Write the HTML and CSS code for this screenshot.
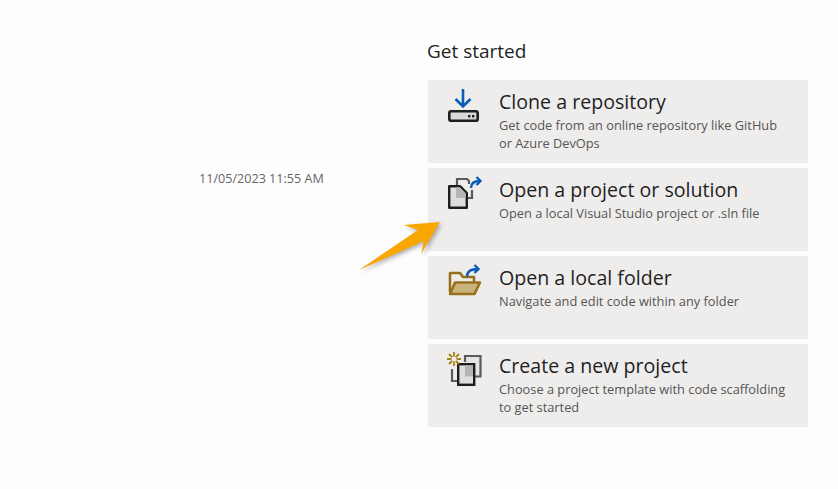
FILE: index.html
```html
<!DOCTYPE html>
<html lang="en">
<head>
<meta charset="utf-8">
<title>Get started</title>
<link rel="stylesheet" href="styles.css">
</head>
<body>
<main class="page">
  <div class="date-col"><span class="date">11/05/2023 11:55 AM</span></div>
  <section class="start">
    <h1 class="start-title">Get started</h1>
    <div class="cards">
      <article class="card">
        <svg class="icon" width="38" height="38" viewBox="0 0 38 38" fill="none">
          <path d="M18 1V18M10.500 11L18 18.500L25.500 11" stroke="#0a5cb8" stroke-width="2.600"/>
          <rect x="4.300" y="23.300" width="28.400" height="9.400" rx="1.800" fill="#d9d9d9" stroke="#1e1e1e" stroke-width="2.600"/>
          <rect x="23" y="27" width="2.400" height="2.400" fill="#1e1e1e"/><rect x="27" y="27" width="2.400" height="2.400" fill="#1e1e1e"/>
        </svg>
        <div class="card-text">
          <h2 class="card-title">Clone a repository</h2>
          <p class="card-desc">Get code from an online repository like GitHub or Azure DevOps</p>
        </div>
      </article>
      <article class="card">
        <svg class="icon" width="38" height="38" viewBox="0 0 38 38" fill="none">
          <path d="M12 9V3H22L24 5V8M27 14V22H22" stroke="#5a5a5a" stroke-width="2.200"/>
          <path d="M4.200 10.200H15L21.800 17V31.800H4.200Z" fill="#dedede" stroke="#1e1e1e" stroke-width="2.400" stroke-linejoin="round"/>
          <path d="M11 11.500H15L20.500 17V22H11Z" fill="#b5b5b5"/>
          <path d="M26 12C26 7 29 5 35 5M31.500 1L35.500 5L31.500 9" stroke="#0a5cb8" stroke-width="2.400"/>
        </svg>
        <div class="card-text">
          <h2 class="card-title">Open a project or solution</h2>
          <p class="card-desc">Open a local Visual Studio project or .sln file</p>
        </div>
      </article>
      <article class="card">
        <svg class="icon" width="38" height="38" viewBox="0 0 38 38" fill="none">
          <path d="M5 28V9H15L18 13H29V18" stroke="#96701a" stroke-width="2.600" stroke-linejoin="round"/>
          <path d="M5 30L10 18.500H35L29.500 30Z" fill="#c9b27c" stroke="#96701a" stroke-width="2.600" stroke-linejoin="round"/>
          <path d="M22 12.500C22 7 26 5 33 5M29.500 1L33.500 5L29.500 9" stroke="#0a5cb8" stroke-width="2.400"/>
        </svg>
        <div class="card-text">
          <h2 class="card-title">Open a local folder</h2>
          <p class="card-desc">Navigate and edit code within any folder</p>
        </div>
      </article>
      <article class="card">
        <svg class="icon" width="38" height="38" viewBox="0 0 38 38" fill="none">
          <path d="M20 4H35.500V24.500H29V12H20Z" fill="#e4e4e4"/>
          <path d="M20 10V4H35.500V24.500H30" stroke="#5a5a5a" stroke-width="2.200"/>
          <path d="M7 17V29H13" stroke="#5a5a5a" stroke-width="2.200"/>
          <rect x="13.200" y="12.200" width="16" height="20.600" fill="#dedede" stroke="#1e1e1e" stroke-width="2.400"/>
          <rect x="20" y="13.400" width="8" height="11" fill="#b5b5b5"/>
          <path d="M9 0V14M2 7H16M4 2L14 12M14 2L4 12" stroke="#a88116" stroke-width="1.800"/>
          <circle cx="9" cy="7" r="2.600" fill="#eeedec"/>
        </svg>
        <div class="card-text">
          <h2 class="card-title">Create a new project</h2>
          <p class="card-desc">Choose a project template with code scaffolding to get started</p>
        </div>
      </article>
    </div>
  </section>
</main>
<svg class="arrow" width="90" height="60" viewBox="0 0 90 60">
  <path d="M0 57L59 17L45 12L81 9L62 41L65 28Z" fill="#f9a602"/>
</svg>
</body>
</html>
```
FILE: styles.css
```css
* { box-sizing: border-box; }
html, body { margin: 0; height: 100%; }
body {
  background: #fdfdfd;
  color: #1f1f1f;
  font-family: "Open Sans", "Noto Sans", sans-serif;
  overflow: hidden;
}
.page {
  display: flex;
  padding-top: 37px;
}
.date-col {
  width: 428px;
  padding: 129px 0 0 199px;
}
.date {
  font-size: 12.600px;
  line-height: 16px;
  color: #666;
  white-space: nowrap;
}
.start { width: 380px; }
.start-title {
  margin: 0 0 15px -1px;
  font-size: 19px;
  font-weight: 400;
  line-height: 28px;
}
.cards {
  display: flex;
  flex-direction: column;
  gap: 5px;
}
.card {
  display: flex;
  height: 83px;
  background: #eeedec;
  padding: 8px 20px 0 17px;
}
.icon { flex: none; margin-right: 16px; overflow: visible; }
.card-text { min-width: 0; }
.card-title {
  margin: 0;
  font-size: 19.600px;
  font-weight: 400;
  line-height: 28px;
}
.card-desc {
  margin: 0;
  font-size: 12.800px;
  line-height: 18px;
  color: #555;
}
.arrow {
  position: absolute;
  left: 359px;
  top: 213px;
  filter: drop-shadow(2px 2px 2px rgba(80, 80, 80, .45));
}
```
